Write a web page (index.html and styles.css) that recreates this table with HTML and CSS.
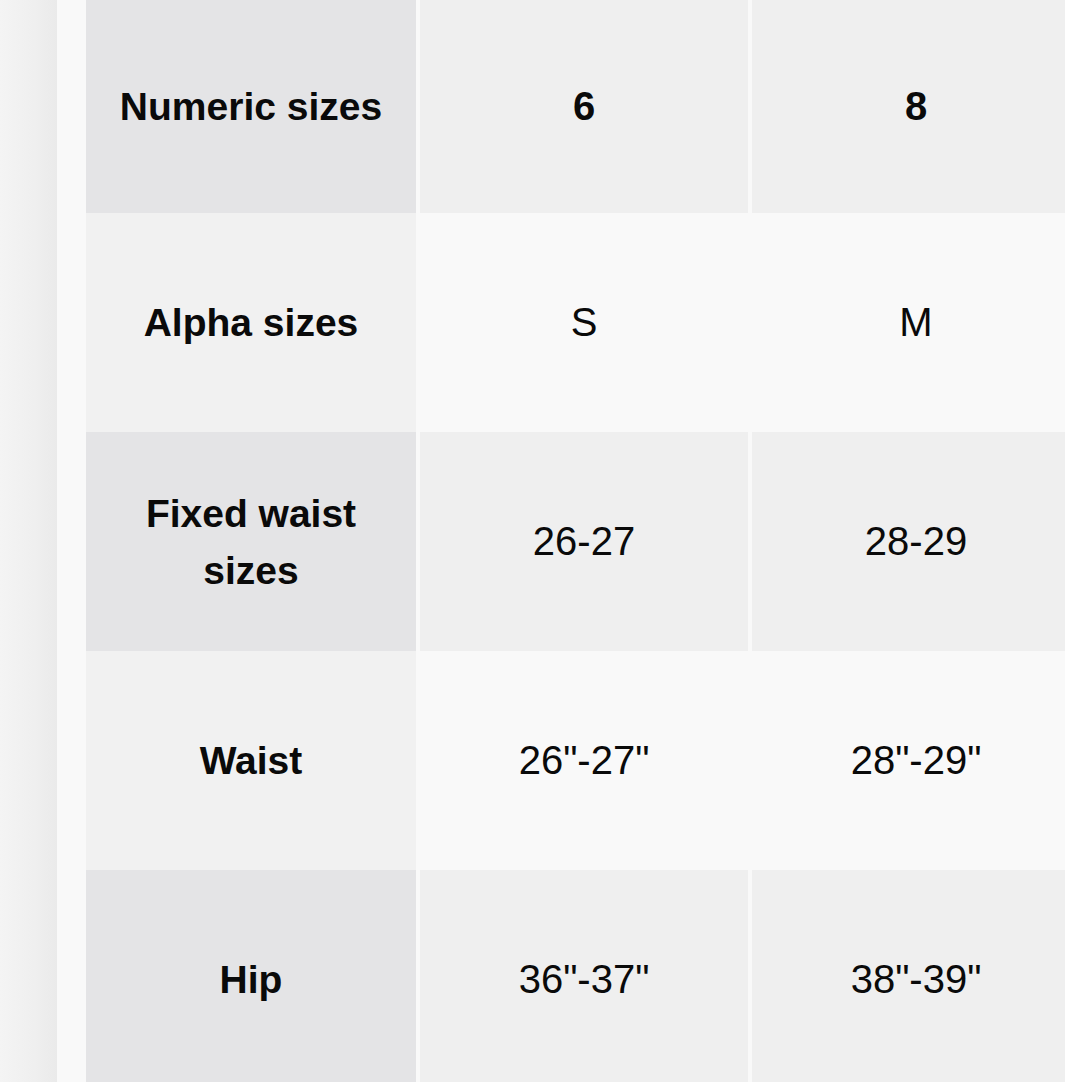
FILE: index.html
```html
<!DOCTYPE html>
<html lang="en">
<head>
<meta charset="utf-8">
<title>Size chart</title>
<link rel="stylesheet" href="styles.css">
</head>
<body>
<div class="page">
  <aside class="side"></aside>
  <div class="spacer"></div>
  <div class="chart">
    <div class="row row-dark row-first">
      <div class="cell label">Numeric sizes</div>
      <div class="cell value strong">6</div>
      <div class="cell value strong">8</div>
    </div>
    <div class="row row-light">
      <div class="cell label">Alpha sizes</div>
      <div class="cell value">S</div>
      <div class="cell value">M</div>
    </div>
    <div class="row row-dark">
      <div class="cell label">Fixed waist<br>sizes</div>
      <div class="cell value">26-27</div>
      <div class="cell value">28-29</div>
    </div>
    <div class="row row-light">
      <div class="cell label">Waist</div>
      <div class="cell value">26"-27"</div>
      <div class="cell value">28"-29"</div>
    </div>
    <div class="row row-dark">
      <div class="cell label">Hip</div>
      <div class="cell value">36"-37"</div>
      <div class="cell value">38"-39"</div>
    </div>
  </div>
</div>
</body>
</html>
```
FILE: styles.css
```css
html, body {
  margin: 0;
  padding: 0;
  background: #f9f9f9;
  overflow: hidden;
}

.page {
  display: flex;
  width: 1065px;
  height: 1082px;
  overflow: hidden;
  font-family: "Liberation Sans", Arial, sans-serif;
  color: #0a0a0a;
}

.side {
  flex: 0 0 57px;
  background: linear-gradient(to right, #f4f4f4 0%, #efefef 60%, #eaeaea 100%);
}

.spacer {
  flex: 0 0 29px;
  background: #f9f9f9;
}

.chart {
  flex: 0 0 auto;
  display: flex;
  flex-direction: column;
}

.row {
  display: grid;
  grid-template-columns: 330px 328px 328px;
  column-gap: 4px;
  height: 219px;
  flex: 0 0 auto;
}

.row-first {
  height: 213px;
}

.cell {
  display: flex;
  align-items: center;
  justify-content: center;
  text-align: center;
  font-size: 40px;
  line-height: 57px;
}

.label {
  font-weight: 700;
  font-size: 39px;
}

.strong {
  font-weight: 700;
}

.row-dark .label {
  background: #e4e4e6;
}

.row-dark .value {
  background: #efefef;
}

.row-light .label {
  background: #f1f1f1;
}

.row-light .value {
  background: #f9f9f9;
}
```
